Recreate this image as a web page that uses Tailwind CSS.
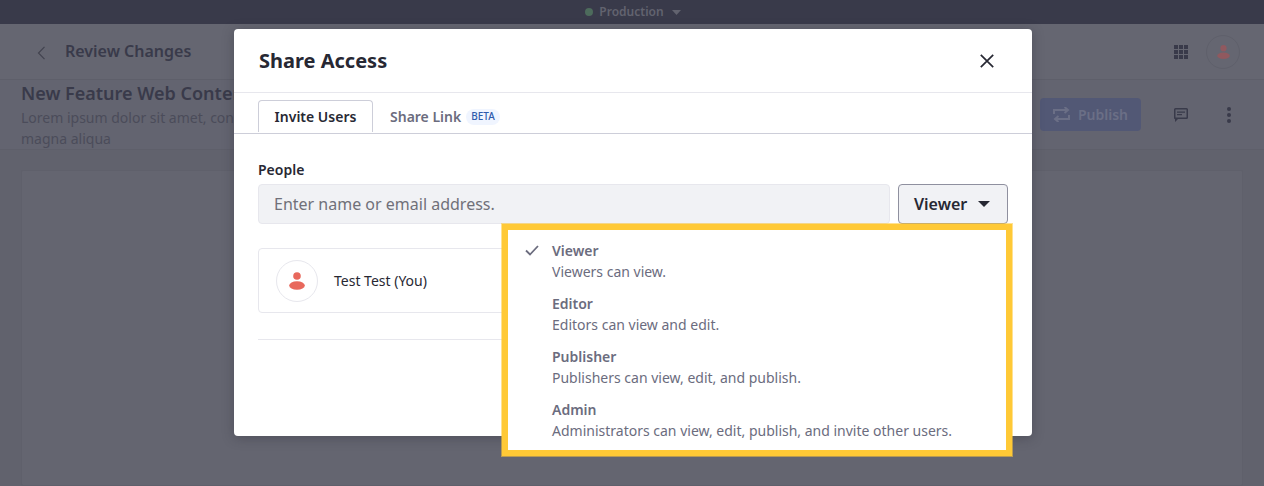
<!DOCTYPE html>
<html>
<head>
<meta charset="utf-8">
<script src="https://cdn.jsdelivr.net/npm/@tailwindcss/browser@4"></script>
</head>
<body class="m-0 h-[486px] w-[1264px] overflow-hidden bg-white font-['Noto_Sans',sans-serif] text-[#272833]">
<div class="relative h-[486px] w-[1264px] overflow-hidden">
  <div class="flex h-6 items-center justify-center bg-[#393a4a] pl-[2px] text-[12px] font-semibold text-[#62636f]">
    <span class="h-2 w-2 rounded-full bg-[#4d6b5c]"></span>
    <span class="ml-[6px]">Production</span>
    <svg class="ml-[8px]" width="9" height="5" viewBox="0 0 9 5"><path d="M0 0h9L4.500 5z" fill="#62636f"/></svg>
  </div>
  <div class="flex h-14 items-center justify-between border-b border-[#5e5f6a] bg-[#656671] pl-[36px] pr-[24px]">
    <div class="flex items-center gap-[18px]">
      <svg class="mt-[2px]" width="11" height="14" viewBox="0 0 11 14" fill="none"><path d="M8.500 .8 2.500 7 8.500 13.200" stroke="#42434f" stroke-width="1.200"/></svg>
      <span class="pb-[2px] text-[16px] font-semibold text-[#393a4a]">Review Changes</span>
    </div>
    <div class="flex items-center gap-[18px]">
      <div class="grid grid-cols-3 gap-[1px]">
        <i class="h-1 w-1 bg-[#393a4a]"></i><i class="h-1 w-1 bg-[#393a4a]"></i><i class="h-1 w-1 bg-[#393a4a]"></i>
        <i class="h-1 w-1 bg-[#393a4a]"></i><i class="h-1 w-1 bg-[#393a4a]"></i><i class="h-1 w-1 bg-[#393a4a]"></i>
        <i class="h-1 w-1 bg-[#393a4a]"></i><i class="h-1 w-1 bg-[#393a4a]"></i><i class="h-1 w-1 bg-[#393a4a]"></i>
      </div>
      <div class="flex h-[34px] w-[34px] items-center justify-center rounded-full border border-[#5f606b]">
        <svg width="13" height="14" viewBox="0 0 13 14"><circle cx="6.500" cy="3.200" r="3.100" fill="#90595f"/><ellipse cx="6.500" cy="10.800" rx="6.300" ry="3.200" fill="#90595f"/></svg>
      </div>
    </div>
  </div>
  <div class="flex h-[70px] items-center justify-between border-b border-[#5e5f6a] bg-[#636470] pl-[21px] pr-[33px]">
    <div class="w-[213px] overflow-hidden whitespace-nowrap">
      <div class="text-[18px] leading-[24px] font-semibold text-[#393a4a]">New Feature Web Content</div>
      <div class="mt-[2px] text-[14px] leading-[21px] text-[#4b4c5a]">Lorem ipsum dolor sit amet, consectetur</div>
      <div class="text-[14px] leading-[21px] text-[#4b4c5a]">magna aliqua</div>
    </div>
    <div class="flex items-center">
      <div class="flex h-[33px] w-[101px] items-center justify-center gap-2 rounded-[4px] bg-[#525875] text-[14px] font-semibold text-[#6b6f86]">
        <svg width="17" height="15" viewBox="0 0 17 15" fill="none" stroke="#6b6f86" stroke-width="2"><path d="M1 7V3h13M11.500 0l3.500 3-3.500 3M16 8v4H3M5.500 9 2 12l3.500 3"/></svg>
        <span>Publish</span>
      </div>
      <svg class="ml-[33px]" width="14" height="14" viewBox="0 0 14 14"><path d="M1.500 0h11A1.500 1.500 0 0 1 14 1.500v8a1.500 1.500 0 0 1-1.500 1.500H4l-3 3v-3A1 1 0 0 1 0 9.500v-8A1.500 1.500 0 0 1 1.500 0z" fill="#393a4a"/><path d="M1.500 1.500h11v8h-11z" fill="#636470"/><path d="M3 3.500h8v1.300H3zM3 6h5v1.300H3z" fill="#393a4a"/></svg>
      <div class="ml-[39px] flex flex-col gap-[2px]">
        <i class="h-1 w-1 rounded-full bg-[#393a4a]"></i><i class="h-1 w-1 rounded-full bg-[#393a4a]"></i><i class="h-1 w-1 rounded-full bg-[#393a4a]"></i>
      </div>
    </div>
  </div>
  <div class="h-[336px] bg-[#61626d] px-[21px] pt-[20px]">
    <div class="h-full rounded-[2px] border border-[#5f606b] bg-[#646570]"></div>
  </div>

  <div class="absolute left-[234px] top-[29px] h-[407px] w-[798px] rounded-[4px] bg-white shadow-[0_2px_12px_rgba(39,40,51,0.35)]">
    <div class="flex h-[64px] items-center justify-between border-b border-[#e7e7ed] pl-[25px] pr-[38px]">
      <span class="text-[20px] font-bold text-[#272833]">Share Access</span>
      <svg width="14" height="14" viewBox="0 0 14 14" fill="none" stroke="#272833" stroke-width="1.700"><path d="M.8.8l12.400 12.400M13.200.8.8 13.200"/></svg>
    </div>
    <div class="flex h-[41px] items-end gap-[1px] border-b border-[#cdced9] pl-[24px]">
      <div class="mb-[1px] flex h-[32px] w-[115px] items-center justify-center rounded-t-[4px] border border-b-0 border-[#cdced9] text-[14px] font-semibold text-[#272833]">Invite Users</div>
      <div class="flex h-[33px] items-center pl-[16px] text-[14px] font-semibold text-[#6b6c7e]">Share Link
        <span class="ml-[5px] flex h-[16px] items-center rounded-[8px] bg-[#f0f5ff] px-[5px] text-[10px] font-medium text-[#2e5aac]">BETA</span>
      </div>
    </div>
    <div class="px-[24px] pt-[26px]">
      <div class="text-[14px] leading-[20px] font-semibold text-[#272833]">People</div>
      <div class="mt-[4px] flex gap-2">
        <div class="flex h-10 flex-1 items-center rounded-[4px] border border-[#e7e7ed] bg-[#f1f2f5] pl-[15px] text-[16px] text-[#707079]">Enter name or email address.</div>
        <div class="flex h-10 w-[110px] items-center gap-[11px] rounded-[4px] border border-[#8f909f] bg-[#f1f2f5] pl-[15px] text-[16px] font-semibold text-[#272833]">Viewer
          <svg width="12" height="6" viewBox="0 0 12 6"><path d="M0 0h12L6 6z" fill="#272833"/></svg>
        </div>
      </div>
      <div class="mt-[24px] flex h-[65px] items-center gap-4 rounded-[4px] border border-[#e7e7ed] pl-[17px]">
        <div class="flex h-[42px] w-[42px] items-center justify-center rounded-full border border-[#e7e7ed]">
          <svg width="16" height="18" viewBox="0 0 16 18"><circle cx="8" cy="4" r="3.800" fill="#e8685c"/><ellipse cx="8" cy="13.500" rx="7.800" ry="4.300" fill="#e8685c"/></svg>
        </div>
        <span class="text-[14px] text-[#272833]">Test Test (You)</span>
      </div>
      <div class="mt-[26px] border-t border-[#e7e7ed]"></div>
    </div>
  </div>

  <div class="absolute left-[502px] top-[224px] h-[232px] w-[510px] border-[6px] border-[#ffc936] bg-white shadow-[0_0_0_1px_rgba(255,201,54,0.55)]">
    <svg class="absolute left-[17px] top-[15px]" width="14" height="11" viewBox="0 0 14 11" fill="none" stroke="#6b6c7e" stroke-width="1.800"><path d="M1 5.500 5 9.500 13 1"/></svg>
    <div class="flex flex-col pl-[44px] pt-[10px] text-[14px] leading-[21px] text-[#6b6c7e]">
      <div class="h-[53px]"><div class="font-semibold">Viewer</div><div>Viewers can view.</div></div>
      <div class="h-[53px]"><div class="font-semibold">Editor</div><div>Editors can view and edit.</div></div>
      <div class="h-[53px]"><div class="font-semibold">Publisher</div><div>Publishers can view, edit, and publish.</div></div>
      <div class="h-[53px]"><div class="font-semibold">Admin</div><div>Administrators can view, edit, publish, and invite other users.</div></div>
    </div>
  </div>
</div>
</body>
</html>
